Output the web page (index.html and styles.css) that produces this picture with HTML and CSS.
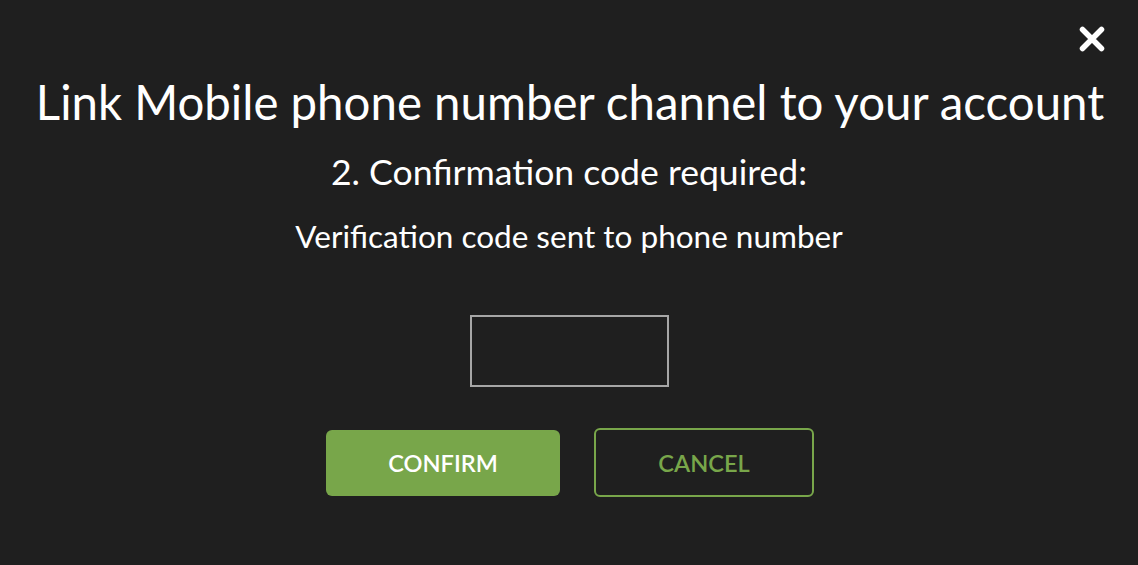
FILE: index.html
```html
<!DOCTYPE html>
<html>
<head>
<meta charset="utf-8">
<link rel="stylesheet" href="styles.css">
</head>
<body>
<div class="modal">
  <div class="topbar">
    <button class="close" aria-label="Close">
      <svg width="28" height="26" viewBox="0 0 28 26"><path d="M4.5 3.5 L23.5 22.5 M23.5 3.5 L4.5 22.5" stroke="#fff" stroke-width="5.5" stroke-linecap="round"/></svg>
    </button>
  </div>
  <h1 class="title">Link Mobile phone number channel to your account</h1>
  <h2 class="subtitle">2. Confirmation code required:</h2>
  <p class="info">Verification code sent to phone number</p>
  <div class="field"><input class="code" type="text"></div>
  <div class="actions">
    <button class="btn confirm">CONFIRM</button>
    <button class="btn cancel">CANCEL</button>
  </div>
</div>
</body>
</html>
```
FILE: styles.css
```css
html, body {
  margin: 0;
  padding: 0;
  background: #1f1f1f;
  font-family: Lato, "Open Sans", sans-serif;
  color: #fff;
}
.modal {
  width: 1138px;
  height: 565px;
  display: flex;
  flex-direction: column;
  align-items: center;
}
.topbar {
  align-self: stretch;
  display: flex;
  justify-content: flex-end;
  padding: 26px 32px 0 0;
  height: 26px;
}
.close {
  background: none;
  border: 0;
  padding: 0;
  width: 28px;
  height: 26px;
  cursor: pointer;
  display: block;
}
.close svg {
  display: block;
}
.title {
  margin: 22px 0 0 2px;
  font-weight: 400;
  font-size: 47.4px;
  line-height: 56px;
  white-space: nowrap;
}
.subtitle {
  margin: 21px 0 0;
  font-weight: 400;
  font-size: 35.6px;
  line-height: 42px;
}
.info {
  margin: 24px 0 0;
  font-size: 31.5px;
  line-height: 38px;
}
.field {
  margin-top: 60px;
  height: 72px;
}
.code {
  box-sizing: border-box;
  display: block;
  width: 199px;
  height: 72px;
  margin: 0;
  background: transparent;
  border: 2px solid #a6a6a6;
  color: #fff;
  font-family: Lato, sans-serif;
  font-size: 24px;
  text-align: center;
  outline: none;
}
.actions {
  margin-top: 41px;
  padding-left: 2px;
  display: flex;
  gap: 34px;
  align-items: center;
}
.btn {
  box-sizing: border-box;
  font-family: Lato, sans-serif;
  font-size: 23.6px;
  font-weight: 600;
  border-radius: 6px;
  cursor: pointer;
  padding: 0;
}
.confirm {
  width: 234px;
  height: 66px;
  margin-top: 1px;
  background: #78a64a;
  border: 0;
  color: #fff;
}
.cancel {
  width: 220px;
  height: 69px;
  background: transparent;
  border: 2px solid #78a64a;
  color: #78a64a;
}
```
